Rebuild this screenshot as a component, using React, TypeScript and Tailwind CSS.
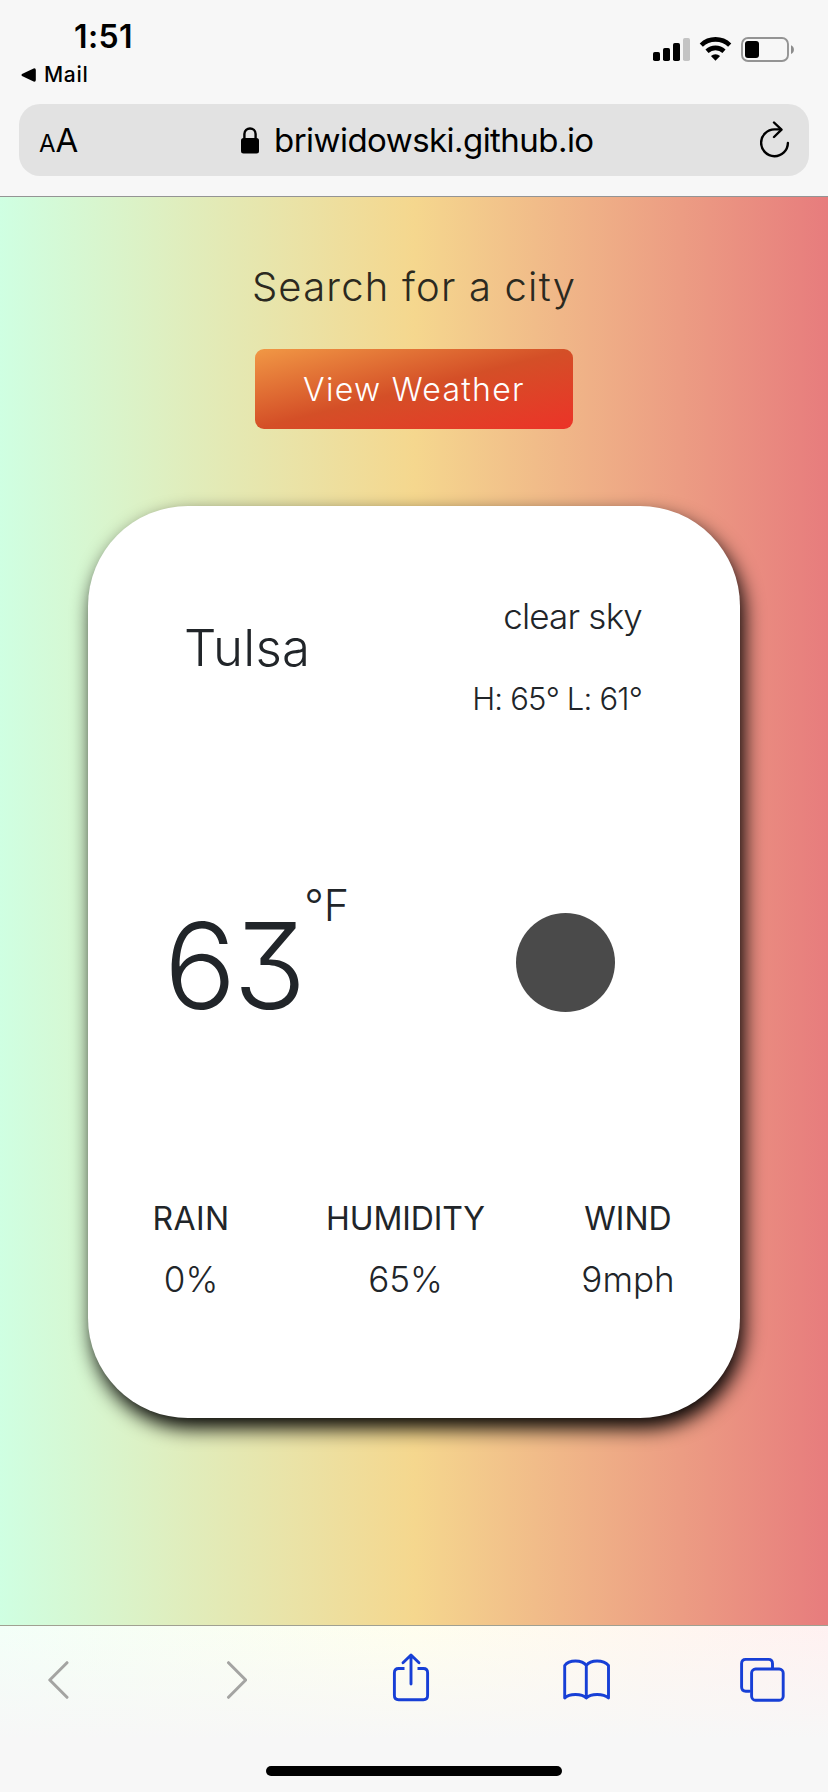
import React from "react";

const stats = [
  { label: "RAIN", value: "0%", box: "w-[206px]", labelCls: "tracking-[0.4px]" },
  { label: "HUMIDITY", value: "65%", box: "w-[223px]", labelCls: "tracking-[-0.1px]" },
  { label: "WIND", value: "9mph", box: "w-[222px]", labelCls: "tracking-[0px]" },
];

function StatusIcons() {
  return (
    <svg width="144" height="28" viewBox="0 0 144 28" className="block">
      <rect x="3" y="16" width="7" height="9" rx="1.8" />
      <rect x="13" y="12" width="7" height="13" rx="1.8" />
      <rect x="23" y="7" width="7" height="18" rx="1.8" />
      <rect x="33" y="2" width="7" height="23" rx="1.8" fill="#c4c4c4" />
      <g fill="none" stroke="#000" strokeWidth="4.6">
        <path d="M51.3 9.1 A20.5 20.5 0 0 1 79.7 9.1" />
        <path d="M57 15.2 A12.6 12.6 0 0 1 74 15.2" />
      </g>
      <path d="M65.5 24.8 L60.9 20.1 A6.8 6.8 0 0 1 70.1 20.1 Z" />
      <rect x="92" y="2" width="46" height="23" rx="6" fill="none" stroke="#949494" strokeWidth="1.9" />
      <rect x="95" y="5" width="14" height="17" rx="3" />
      <path d="M141 9.3 C144.9 11 144.9 16.3 141 18 Z" fill="#8c8c8c" />
    </svg>
  );
}

function LockIcon() {
  return (
    <svg width="18" height="27" viewBox="0 0 18 27" className="block">
      <rect x="0" y="11" width="18" height="15.5" rx="2.5" />
      <path d="M3.4 12 V7 C3.4 -0.3 14.6 -0.3 14.6 7 V12" fill="none" stroke="#000" strokeWidth="2.4" />
    </svg>
  );
}

function ReloadIcon() {
  return (
    <svg width="30" height="38" viewBox="0 0 30 38" className="block" fill="none" stroke="#000" strokeWidth="2.4" strokeLinecap="round" strokeLinejoin="round">
      <path d="M27.9 22 A13.4 13.4 0 1 1 14.5 8.4 H20" />
      <path d="M14 1.5 L21.5 8.7 L14 16" />
    </svg>
  );
}

function Chevron({ d }: { d: string }) {
  return (
    <svg width="22" height="40" viewBox="0 0 22 40" className="block" fill="none" stroke="#a4a4a2" strokeWidth="3" strokeLinecap="round" strokeLinejoin="round">
      <path d={d} />
    </svg>
  );
}

function ToolbarIcon({ children, w }: { children: React.ReactNode; w: number }) {
  return (
    <svg width={w} height="50" viewBox={`0 0 ${w} 50`} className="block" fill="none" stroke="#173fd6" strokeWidth="2.9" strokeLinecap="round" strokeLinejoin="round">
      {children}
    </svg>
  );
}

export default function App() {
  return (
    <div className="flex h-[1792px] w-[828px] flex-col overflow-hidden bg-[#f7f7f7] font-['Inter',sans-serif] whitespace-nowrap text-black">
      <header className="h-[197px] border-b border-[#00000066] bg-[#f7f7f7] bg-clip-padding">
        <div className="flex h-[104px] justify-between">
          <div className="pt-[20px] pl-[21px]">
            <div className="h-[32px] pl-[53px] text-[32px] leading-[33px] font-semibold tracking-[0.4px]">1:51</div>
            <div className="flex h-[45px] items-center gap-[8px]">
              <svg width="15" height="14" viewBox="0 0 15 14">
                <path d="M1 6 L12.6 0.4 Q14.8 -0.2 14.8 2 V12 Q14.8 14.2 12.6 13.6 L1 8 Q0 7 1 6Z" />
              </svg>
              <span className="text-[21px] font-medium tracking-[0.7px]">Mail</span>
            </div>
          </div>
          <div className="pt-[36px] pr-[34px]">
            <StatusIcons />
          </div>
        </div>
        <div className="mx-[19px] flex h-[72px] items-center rounded-[21px] bg-[#e2e2e2] pr-[19px] pl-[20px]">
          <div className="flex h-[36px] w-[202px] items-baseline leading-[36px]">
            <span className="text-[24px]">A</span>
            <span className="text-[33px]">A</span>
          </div>
          <LockIcon />
          <div className="ml-[15px] flex-1 pt-[2px] text-[33px] tracking-[-0.55px]">briwidowski.github.io</div>
          <ReloadIcon />
        </div>
      </header>

      <main className="flex h-[1428px] flex-col items-center bg-[linear-gradient(to_right,#cfffe2_0%,#f5d78e_50%,#e77c7d_100%)]">
        <h1 className="mt-[65px] h-[50px] text-[40px] leading-[50px] font-light tracking-[1.2px] text-[#2b2920]">Search for a city</h1>
        <button className="mt-[37px] h-[80px] w-[318px] rounded-[9px] bg-[linear-gradient(to_bottom_right,#f19845,#d44f27_50%,#ec3328)] pt-[2px] text-[32px] font-light tracking-[1.3px] text-white">
          View Weather
        </button>

        <section className="mt-[77px] flex h-[912px] w-[652px] flex-col rounded-[100px] bg-white text-[#212529] shadow-[4px_10px_20px_#000]">
          <div className="flex h-[300px] justify-between pr-[98px] pl-[96px]">
            <h2 className="mt-[112px] h-[60px] text-[51px] leading-[60px] font-light tracking-[0.3px]">Tulsa</h2>
            <div className="mt-[90px] text-right font-light">
              <div className="h-[40px] text-[35px] leading-[40px] tracking-[-0.8px]">clear sky</div>
              <div className="mt-[43px] h-[40px] text-[31px] leading-[40px] tracking-[-0.8px]">H: 65° L: 61°</div>
            </div>
          </div>
          <div className="flex h-[320px]">
            <div className="flex w-[428px] pt-[70px] pl-[76px] font-light">
              <div className="mt-[20px] h-[140px] text-[120px] leading-[140px] tracking-[-3px] [font-feature-settings:'cv09']">63</div>
              <div className="h-[60px] pl-[1px] text-[43px] leading-[59px]">°F</div>
            </div>
            <div className="mt-[107px] h-[99px] w-[99px] rounded-full bg-[#4a4a4a]" />
          </div>
          <div className="flex">
            {stats.map((s) => (
              <div key={s.label} className={`flex flex-col items-center pt-[71px] ${s.box}`}>
                <div className={`h-[44px] text-[32px] leading-[44px] ${s.labelCls}`}>{s.label}</div>
                <div className="mt-[15px] h-[46px] text-[35px] leading-[46px] font-light">{s.value}</div>
              </div>
            ))}
          </div>
        </section>
      </main>

      <footer className="flex h-[167px] flex-col border-t border-[#66664c99] bg-[linear-gradient(to_bottom,#f7f7f700,#f7f7f7_68%),linear-gradient(to_right,#f3fff8,#fffeee_50%,#fff1f1)] bg-clip-padding">
        <div className="flex h-[100px] items-start pt-[26px] pl-[48px]">
          <div className="w-[177px] pt-[8px]"><Chevron d="M19 2.7 L1.8 20 L19 37.3" /></div>
          <div className="w-[165px] pt-[8px]"><Chevron d="M3.5 2.7 L20.7 20 L3.5 37.3" /></div>
          <div className="w-[170px]">
            <ToolbarIcon w={42}>
              <path d="M14.5 16.5 H8.6 Q4.4 16.5 4.4 20.7 V43.6 Q4.4 47.8 8.6 47.8 H33.4 Q37.6 47.8 37.6 43.6 V20.7 Q37.6 16.5 33.4 16.5 H27.5" strokeLinecap="butt" />
              <path d="M21 32 V3.5 M13 10.7 L21 3 L29 10.7" />
            </ToolbarIcon>
          </div>
          <div className="w-[177px]">
            <ToolbarIcon w={54}>
              <path d="M4.7 46 V13.5 Q8 9 15.5 9 Q23 9 26.3 13.5 Q29.6 9 37.1 9 Q44.6 9 48.5 13.5 V46 Q44.6 42.5 37.1 42.5 Q29.6 42.5 26.3 46 Q23 42.5 15.5 42.5 Q8 42.5 4.7 46 Z M26.3 13.5 V46" />
            </ToolbarIcon>
          </div>
          <ToolbarIcon w={50}>
            <path d="M12.5 39.3 H8.8 Q4.6 39.3 4.6 35.1 V11.6 Q4.6 7.4 8.8 7.4 H31.5 Q35.5 7.4 35.5 11.6 V16.4" />
            <rect x="14.6" y="17" width="31.6" height="31.2" rx="4" />
          </ToolbarIcon>
        </div>
        <div className="mt-[40px] ml-[266px] h-[10px] w-[296px] rounded-full bg-black" />
      </footer>
    </div>
  );
}
